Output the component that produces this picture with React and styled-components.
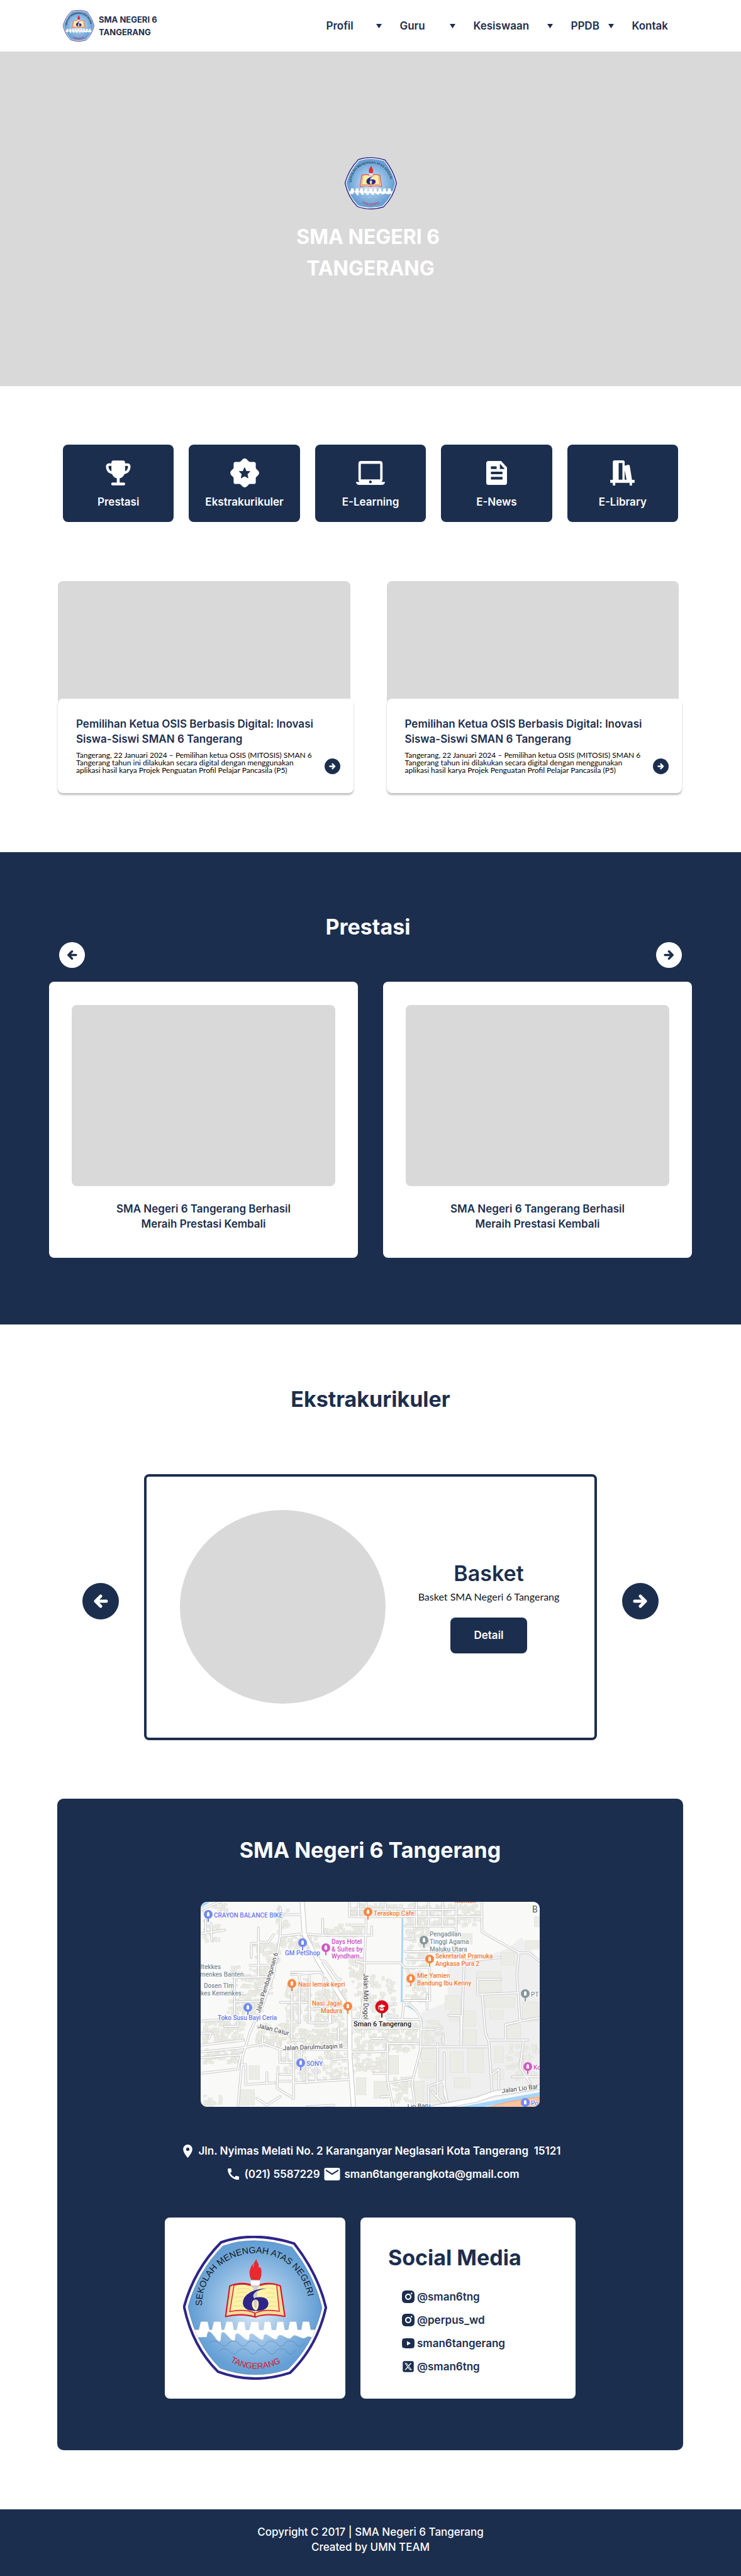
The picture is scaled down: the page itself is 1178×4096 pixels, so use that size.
import React from 'react';
import styled, { createGlobalStyle } from 'styled-components';
import { MdLocationOn, MdCall, MdEmail } from 'react-icons/md';
import { RiInstagramFill, RiYoutubeFill } from 'react-icons/ri';
import { FaSquareXTwitter } from 'react-icons/fa6';

const navy = '#1c2e4e';
const grey = '#d9d9d9';
const display = '"Inter", "Open Sans", sans-serif';
const body = '"Lato", "Open Sans", sans-serif';

const GlobalStyle = createGlobalStyle`
  *, *::before, *::after { box-sizing: border-box; }
  body { margin: 0; background: #fff; color: ${navy}; font-family: ${display}; }
  h1, h2, h3, p, ul { margin: 0; padding: 0; }
  ul { list-style: none; }
  a { color: inherit; text-decoration: none; }
  button { font: inherit; color: inherit; border: 0; padding: 0; background: none; cursor: pointer; }
  svg { display: block; flex: none; }
`;

/* ---------- header ---------- */

const Header = styled.header`
  display: flex;
  align-items: center;
  justify-content: space-between;
  min-height: 82px;
  padding: 0 116px 0 100px;
`;

const Brand = styled.a`
  display: flex;
  align-items: center;
  gap: 7px;
  font-size: 13px;
  line-height: 20px;
  font-weight: 700;
`;

const Nav = styled.nav`
  display: flex;
  align-items: center;
  gap: 28px;
  font-size: 17px;
  line-height: 24px;
  font-weight: 600;
`;

const NavMenu = styled.button`
  display: flex;
  align-items: center;
  justify-content: space-between;
  min-width: ${(p) => p.$width}px;
`;

/* ---------- hero ---------- */

const Hero = styled.section`
  display: flex;
  flex-direction: column;
  align-items: center;
  gap: 19px;
  min-height: 532px;
  padding-top: 168px;
  background: ${grey};
`;

const HeroTitle = styled.h1`
  color: #fff;
  font-size: 32px;
  line-height: 50px;
  font-weight: 700;
  text-align: center;
`;

/* ---------- shortcuts ---------- */

const Shortcuts = styled.nav`
  display: grid;
  grid-template-columns: repeat(5, 1fr);
  gap: 24px;
  padding: 93px 100px 0;
`;

const Shortcut = styled.a`
  display: flex;
  flex-direction: column;
  align-items: center;
  gap: 10px;
  padding: 21px 0 20px;
  border-radius: 8px;
  background: ${navy};
  color: #fff;
  font-size: 17px;
  line-height: 24px;
  font-weight: 600;
`;

const ShortcutIcon = styled.span`
  display: flex;
  align-items: center;
  height: 48px;
`;

/* ---------- news ---------- */

const NewsGrid = styled.section`
  display: grid;
  grid-template-columns: 1fr 1fr;
  gap: 53px;
  padding: 94px 94px 0 92px;
`;

const NewsPhoto = styled.div`
  height: 195px;
  margin-right: 5px;
  border-radius: 8px 8px 0 0;
  background: ${grey};
`;

const NewsBody = styled.div`
  display: flex;
  align-items: flex-end;
  gap: 14px;
  margin-top: -8px;
  padding: 28px 21px 30px 29px;
  border-radius: 8px;
  background: #fff;
  box-shadow: 0 3px 3px rgba(0, 0, 0, 0.25);
`;

const NewsText = styled.div`
  flex: 1;
`;

const CardTitle = styled.h3`
  font-size: 17px;
  line-height: 24px;
  font-weight: 600;
`;

const NewsSummary = styled.p`
  margin-top: 8px;
  color: #000;
  font: 400 12px/12px ${body};
`;

const RoundButton = styled.button`
  display: flex;
  flex: none;
  align-items: center;
  justify-content: center;
  width: ${(p) => p.$size}px;
  height: ${(p) => p.$size}px;
  border-radius: 50%;
  background: ${(p) => (p.$light ? '#fff' : navy)};
  color: ${(p) => (p.$light ? navy : '#fff')};
`;

/* ---------- achievements ---------- */

const Achievements = styled.section`
  margin-top: 94px;
  padding: 99px 78px 106px;
  background: ${navy};
`;

const SectionTitle = styled.h2`
  color: ${(p) => (p.$light ? '#fff' : navy)};
  font-size: 34px;
  line-height: 40px;
  font-weight: 700;
  text-align: center;
`;

const PagerRow = styled.div`
  display: flex;
  justify-content: space-between;
  padding: 4px 16px 22px;
`;

const AchievementGrid = styled.div`
  display: grid;
  grid-template-columns: 1fr 1fr;
  gap: 40px;
`;

const AchievementCard = styled.article`
  display: flex;
  flex-direction: column;
  align-items: center;
  gap: 24px;
  padding: 37px 36px 42px;
  border-radius: 8px;
  background: #fff;
  text-align: center;
`;

const AchievementPhoto = styled.div`
  width: 100%;
  height: 288px;
  border-radius: 8px;
  background: ${grey};
`;

const AchievementTitle = styled(CardTitle)`
  max-width: 300px;
`;

/* ---------- extracurricular ---------- */

const Clubs = styled.section`
  padding: 99px 131px 0;
`;

const ClubRow = styled.div`
  display: flex;
  align-items: center;
  gap: 40px;
  margin-top: 99px;
`;

const ClubArrow = styled(RoundButton)`
  margin-bottom: 20px;
`;

const ClubCard = styled.article`
  display: flex;
  align-items: center;
  flex: 1;
  padding: 53px 4px 54px 53px;
  border: 4px solid ${navy};
  border-radius: 8px;
`;

const ClubPhoto = styled.div`
  width: 327px;
  height: 308px;
  border-radius: 50%;
  background: ${grey};
`;

const ClubInfo = styled.div`
  display: flex;
  flex: 1;
  flex-direction: column;
  align-items: center;
`;

const ClubName = styled.h3`
  font-size: 34px;
  line-height: 40px;
  font-weight: 600;
`;

const ClubText = styled.p`
  margin-top: 5px;
  color: #0d1626;
  font: 400 16px/24px ${body};
`;

const DetailButton = styled.button`
  margin-top: 21px;
  padding: 16px 37px;
  border-radius: 8px;
  background: ${navy};
  color: #fff;
  font-size: 17px;
  line-height: 25px;
  font-weight: 600;
`;

/* ---------- contact ---------- */

const Contact = styled.section`
  display: flex;
  flex-direction: column;
  align-items: center;
  margin: 93px 92px 0 91px;
  padding: 62px 24px 82px;
  border-radius: 10px;
  background: ${navy};
  color: #fff;
`;

const MapFrame = styled.div`
  width: 100%;
  max-width: 539px;
  margin: 62px 0 58px;
  overflow: hidden;
  border-radius: 10px;
`;

const Address = styled.address`
  display: flex;
  flex-direction: column;
  align-items: center;
  gap: 13px;
  font-size: 17px;
  line-height: 24px;
  font-weight: 600;
  font-style: normal;
`;

const ContactLine = styled.div`
  display: flex;
  gap: 4px;
  padding-left: ${(p) => p.$indent || 0}px;
`;

const ContactItem = styled.a`
  display: flex;
  align-items: center;
  gap: 5px;
  height: 24px;
  white-space: pre;
`;

const ContactCards = styled.div`
  display: flex;
  gap: 24px;
  margin-top: 57px;
`;

const WhiteCard = styled.div`
  width: ${(p) => p.$width}px;
  padding: ${(p) => p.$pad};
  border-radius: 8px;
  background: #fff;
  color: ${navy};
`;

const SocialTitle = styled.h3`
  font-size: 34px;
  line-height: 40px;
  font-weight: 700;
`;

const SocialList = styled.ul`
  display: flex;
  flex-direction: column;
  gap: 13px;
  margin-top: 30px;
  padding-left: 20px;
`;

const SocialLink = styled.a`
  display: flex;
  align-items: center;
  gap: 2px;
  font-size: 17px;
  line-height: 24px;
  font-weight: 600;
`;

const SocialIcon = styled.span`
  display: flex;
  justify-content: center;
  width: 24px;
`;

const Footer = styled.footer`
  margin-top: 94px;
  padding: 24px 24px 34px;
  background: ${navy};
  color: #fff;
  font-size: 17px;
  line-height: 24px;
  font-weight: 500;
  text-align: center;
`;

/* ---------- drawings ---------- */

const emblemOutline =
  'M268 85Q460 16 700 92Q840 270 887 470Q835 700 675 855Q460 926 250 848Q100 700 50 465Q110 245 268 85Z';

function Emblem({ size, id }) {
  const wave = (x, y, n) => {
    let d = `M${x} ${y}`;
    for (let i = 0; i < n; i += 1) d += 'c28-22 50-8 62 6s34 26 50-6';
    return d;
  };
  return (
    <svg width={size} height={size} viewBox="44 46 850 850" role="img" aria-label="Logo SMA Negeri 6 Tangerang">
      <defs>
        <radialGradient id={`${id}-sky`} gradientUnits="userSpaceOnUse" cx="470" cy="470" r="400">
          <stop offset="0" stopColor="#e4f0fb" />
          <stop offset="0.45" stopColor="#a5c9ea" />
          <stop offset="1" stopColor="#649fd5" />
        </radialGradient>
        <path id={`${id}-top`} d="M156 460V450A314 302 0 0 1 784 450V480" />
        <path id={`${id}-bottom`} d="M322 788Q480 880 650 780" />
      </defs>
      <path d={emblemOutline} fill="#fff" stroke="#2e2588" strokeWidth="15" strokeLinejoin="round" />
      <path
        d={emblemOutline}
        transform="translate(469 470) scale(.945) translate(-469 -470)"
        fill={`url(#${id}-sky)`}
        stroke="#4a6c92"
        strokeWidth="2"
      />
      <path
        d="M110 601H137L149 553H189L200 601H214L226 553H266L272 601H286L300 553H336L344 601H360L370 553H408L414 601H434L446 553H490L494 601H518L524 553H560L568 601H592L600 553H636L644 601H664L674 553H712L720 601H742L750 553H788L797 601H825L806 648q-22-14-36-2t-44-4-40 2-44-2-40 4-44-4-38 4-42-4-42 2-42-2-42 4-42-6-42 4-40-4-44 4L132 645Z"
        fill="#fff"
        stroke="#b9bcc4"
        strokeWidth="2"
      />
      <g fill="none" stroke="#5d83b5" strokeWidth="3">
        <path d={wave(200, 678, 5)} />
        <path d={wave(258, 724, 4)} />
      </g>
      <path d="M320 342Q400 312 470 345Q545 312 618 342L645 522Q540 500 470 526Q390 500 295 523Z" fill="#f3dc9a" stroke="#d8192a" strokeWidth="8" strokeLinejoin="round" />
      <path d="M345 338Q410 322 470 350Q535 322 596 336L612 492Q530 476 470 502Q400 474 320 494Z" fill="#fdf3a9" stroke="#d8192a" strokeWidth="5" />
      <g fill="none" stroke="#dcbf6c" strokeWidth="2">
        <path d="M360 362q50-14 90 6M356 386q40-10 60-4M352 410q30-8 50-4M346 436q30-8 48-4M340 462q40-8 66 4" />
        <path d="M500 362q50-16 84 0M530 386q30-8 58 0M540 410q30-4 50 0M552 436q20-4 44 2M540 464q30-6 60 0" />
      </g>
      <path d="M441 310h58l-4 30h-50z" fill="#fff" stroke="#c2c2c6" strokeWidth="2" />
      <path d="M443 340h54l-14 20-4 100q-8 28-16 0l-4-100z" fill="#cfcdd0" />
      <path d="M446 306Q428 268 442 238Q446 222 458 210L456 238Q464 222 462 206Q468 200 476 184Q482 204 490 214L490 234Q502 226 506 250Q510 282 496 308Z" fill="#e62a2e" />
      <path
        d="M536 358Q460 358 420 394Q388 424 400 460Q416 492 474 490Q546 490 548 444Q546 410 502 408Q470 408 464 416Q448 394 478 374Q504 362 536 358ZM472 422Q492 424 490 452Q488 484 472 486Q452 480 450 448Q452 424 472 422Z"
        fill="#2e2588"
        fillRule="evenodd"
      />
      <path d="M466 500q6 16 0 26" stroke="#d8192a" strokeWidth="8" fill="none" />
      <text fontFamily='"Liberation Sans", Arial, sans-serif' fontSize="53" fill="#16181c">
        <textPath href={`#${id}-top`}>SEKOLAH MENENGAH ATAS NEGERI</textPath>
      </text>
      <text fontFamily='"Liberation Sans", Arial, sans-serif' fontSize="50" fill="#d8192a">
        <textPath href={`#${id}-bottom`}>TANGERANG</textPath>
      </text>
    </svg>
  );
}

const Caret = () => (
  <svg width="9" height="7" viewBox="0 0 9 7" aria-hidden="true">
    <path d="M0 0h9L4.500 7z" fill="currentColor" />
  </svg>
);

const Arrow = ({ size, left }) => (
  <svg width={size} height={size} viewBox="0 0 24 24" aria-hidden="true">
    <path
      d={left ? 'M21 12H4M12 4L4 12l8 8' : 'M3 12h17M12 4l8 8-8 8'}
      fill="none"
      stroke="currentColor"
      strokeWidth="5"
      strokeLinecap="round"
      strokeLinejoin="round"
    />
  </svg>
);

const TrophyIcon = () => (
  <svg width="40" height="40" viewBox="75 44 147 149" aria-hidden="true">
    <path d="M121 45h55q13 0 13 13v48q-2 34-28 43h-25q-26-9-28-43V58q0-13 13-13z" fill="#fff" />
    <path d="M110 69H95q-12 0-12 14q2 32 36 36M187 69h15q12 0 12 14q-2 32-36 36" fill="none" stroke="#fff" strokeWidth="15" />
    <path d="M140 145h17v34h-17z" fill="#fff" />
    <rect x="107" y="175" width="82" height="17" rx="7" fill="#fff" />
  </svg>
);

const BadgeIcon = () => (
  <svg width="46" height="46" viewBox="798 33 171 171" aria-hidden="true">
    <rect x="818" y="53" width="131" height="131" rx="12" fill="#fff" />
    <rect x="818" y="53" width="131" height="131" rx="18" fill="#fff" transform="rotate(45 883.5 118.500)" />
    <path
      d="M883 88l9 20 22 2-16 15 5 22-20-11-20 11 5-22-16-15 22-2z"
      fill={navy}
      stroke={navy}
      strokeWidth="4"
      strokeLinejoin="round"
    />
  </svg>
);

const LaptopIcon = () => (
  <svg width="46" height="38" viewBox="71 45 169 139" aria-hidden="true">
    <path
      d="M101 45h109q16 0 16 16v92q0 10-8 14h22q-1 17-17 17H88q-16 0-17-17h22q-8-4-8-14V61q0-16 16-16zM99 61v91h113V61zM155 159a8 8 0 1 0 .1 0z"
      fill="#fff"
      fillRule="evenodd"
    />
  </svg>
);

const NewsIcon = () => (
  <svg width="33" height="38" viewBox="737 45 120 138" aria-hidden="true">
    <path
      d="M750 45h73l34 37v88q0 13-13 13h-94q-13 0-13-13V58q0-13 13-13zM816 60v31h28zM764 76v15h33V76zM764 107v14h67v-14zM764 137v15h67v-15z"
      fill="#fff"
      fillRule="evenodd"
    />
  </svg>
);

const LibraryIcon = () => (
  <svg width="39" height="40" viewBox="1365 45 142 147" aria-hidden="true">
    <path d="M1390 45h49q10 0 10 10v21l21-5q8-1 9 7l13 81h15v17h-15v16h-14v-16h-84v16h-14v-16h-15v-17h15V55q0-10 10-10zM1414 61v97h22V61zM1449 103v55h11z" fill="#fff" fillRule="evenodd" />
  </svg>
);

/* ---------- map ---------- */

const SX = 0.3546;
const SY = 0.2726;
const mx = (x) => Math.round((x - 23) * SX);
const my = (y) => Math.round((y - 54) * SY);

const blocks = [
  [30, 60, 150, 120, 14], [30, 160, 110, 290, 20], [250, 290, 380, 420, 50], [150, 420, 350, 620, 110],
  [360, 70, 420, 250, 24], [380, 240, 560, 330, 50], [560, 180, 750, 260, 40], [690, 60, 930, 140, 60],
  [680, 360, 760, 500, 44], [700, 470, 900, 740, 80], [940, 60, 1280, 200, 130], [940, 200, 1050, 640, 120],
  [140, 620, 300, 720, 50], [400, 500, 520, 760, 70], [520, 560, 680, 790, 110], [270, 760, 460, 900, 90],
  [30, 740, 220, 880, 90], [460, 790, 690, 900, 120], [700, 740, 1000, 930, 160], [380, 920, 680, 1110, 110],
  [30, 910, 210, 1000, 60], [700, 930, 860, 1060, 50], [880, 1060, 990, 1230, 40], [1020, 740, 1110, 890, 34],
  [1390, 880, 1543, 1100, 60], [30, 1180, 120, 1250, 14],
];

const warehouses = [
  [1120, 600, 68, 80], [1140, 690, 50, 60], [1195, 690, 60, 90], [1200, 800, 60, 84], [1190, 240, 50, 60],
  [1370, 350, 60, 74], [1260, 460, 110, 120], [1300, 610, 130, 60], [1390, 770, 68, 90], [1465, 640, 70, 110],
  [1320, 690, 60, 50], [1010, 910, 60, 66], [1000, 990, 72, 90], [1140, 930, 60, 120], [1220, 910, 70, 140],
  [1050, 1130, 64, 90], [1160, 1080, 70, 60], [860, 950, 50, 110], [800, 1100, 60, 100], [240, 1010, 46, 80],
  [200, 1150, 64, 90], [1480, 280, 60, 50], [1520, 140, 22, 60], [1340, 900, 40, 90], [1320, 1030, 60, 60],
  [980, 1100, 44, 120], [720, 1080, 44, 100],
];

function makeHouses() {
  let seed = 7;
  const next = () => {
    seed = (seed * 16807) % 2147483647;
    return seed / 2147483647;
  };
  return blocks.flatMap(([x0, y0, x1, y1, n]) =>
    Array.from({ length: n }, () => [
      x0 + next() * (x1 - x0 - 12),
      y0 + next() * (y1 - y0 - 14),
      8 + next() * 12,
      10 + next() * 14,
    ]),
  );
}

const houses = makeHouses();

const streets = [
  'M23 100L110 54M23 240L130 218M45 160V240M70 180L72 280M380 90V250L350 480L300 660L245 810L210 960L190 1250',
  'M400 130L480 128M380 255L480 240L560 248H790V200M570 155V248M765 54V180L757 410V560L740 740',
  'M690 54V140H1280M690 96H930M730 54V140M850 54V96M695 190H765M1045 54V200M990 54V200M1168 54V240M1108 54V200M940 98H1160M940 195H1168M1284 54V230L1450 352H1495L1543 400',
  'M1450 352L1440 480L1455 750L1543 730M1390 770L1455 752M1390 770V860M940 345H1180Q1205 350 1205 400L1190 890M1205 400L1365 380M940 436H1050V630H935M940 270H975V240M945 390H1050M1265 505H1370M1265 505V595L1440 585M1285 595L1300 820L1315 870L1330 1170M1315 860H1490',
  'M282 205V290H325L350 245M250 300V380M250 295H282V500M245 425H340M175 495L350 490M175 500V740M175 635H300M130 780H190V740M23 750L140 740',
  'M757 410H920L935 436M720 400L757 412M540 400H580L640 510L650 505M430 480L560 465L580 490M430 465H560M465 480V760M432 540V850M510 480V760H605V700M515 680L690 670M575 500V590M600 640V760M380 640H500M280 560L340 555',
  'M935 640L925 740M930 655H960Q1008 700 1012 760L1008 920L970 1110L985 1250M860 740H1010M855 720H905M770 650H885M690 740H740L760 780M700 790H1005M1010 798H1070M1040 600L1038 680M1135 715L1190 720',
  'M23 890L215 860M215 905L310 882L378 915H690M300 840V882M23 930L215 905M23 965L210 945M23 1055L190 1030L205 940M205 1005H225V1120L355 1110M320 1050V1112M378 920V990H440V1110M370 1020L365 1140L400 1170L440 1200V1110L690 1090M380 1060H440M375 1100H440M410 920V990M440 920V1000M475 920V990M500 1000V1110M540 990V1100',
  'M610 975L690 965M700 930H780L860 925M860 870V1090L885 1250M800 1055H855M865 1110L970 1090M1008 900H1310M1085 880V1200M1045 1240V1130L1110 1100L1125 1190M1115 935V1170L1135 1240M1110 830V880M1190 720V890M1420 1075H1543M1470 860L1455 1020L1500 1110M1330 1060L1360 1030V1170M1060 1160L1120 1240',
  'M430 860H490M640 790V860M790 850H850M865 880H1000M275 1200L320 1240L380 1190M500 1250L620 1240M830 1190H870M23 820H70L60 850',
];

const avenues = ['M478 54L488 245L560 420L690 690L692 960L708 1250'];

const pins = [
  ['#7189f0', 57, 128], ['#7189f0', 481, 292], ['#cd5cc5', 584, 321], ['#fb8540', 773, 114], ['#86969b', 1024, 278],
  ['#fb8540', 1049, 387], ['#fb8540', 966, 500], ['#fb8540', 433, 530], ['#fb8540', 682, 662], ['#7189f0', 234, 671],
  ['#7189f0', 470, 992], ['#86969b', 1478, 590], ['#cd5cc5', 1489, 1016], ['#7189f0', 1478, 1224],
];

const places = [
  ['#5f78ee', 83, 147, 'CRAYON BALANCE BIKE'], ['#5f78ee', 402, 366, 'GM PetShop'],
  ['#cb4fc3', 610, 299, 'Days Hotel'], ['#cb4fc3', 610, 342, '& Suites by'], ['#cb4fc3', 610, 385, 'Wyndham…'],
  ['#f2762f', 799, 133, 'Teraskop Càfe'], ['#f2762f', 1162, 60, 'Montok'],
  ['#7c8f96', 1050, 256, 'Pengadilan'], ['#7c8f96', 1050, 299, 'Tinggi Agama'], ['#7c8f96', 1050, 342, 'Maluku Utara'],
  ['#f2762f', 1075, 385, 'Sekretariat Pramuka'], ['#f2762f', 1075, 428, 'Angkasa Pura 2'],
  ['#f2762f', 992, 499, 'Mie Yamien'], ['#f2762f', 992, 542, 'Bandung Ibu Kenny'],
  ['#7c8f96', 23, 447, 'ltekkes'], ['#7c8f96', 21, 490, 'menkes Banten'], ['#7c8f96', 36, 556, 'Dosen Tlm'],
  ['#7c8f96', 23, 599, 'kes Kemenkes…'], ['#f2762f', 459, 549, 'Nasi lemak kepri'],
  ['#f2762f', 522, 661, 'Nasi Jagal'], ['#f2762f', 562, 704, 'Madura'], ['#5f78ee', 98, 744, 'Toko Susu Bayi Ceria'],
  ['#5f78ee', 496, 1011, 'SONY'], ['#7c8f96', 1504, 608, 'PT'], ['#cb4fc3', 1514, 1035, 'Ko'], ['#5f78ee', 1504, 1242, 'Po'],
];

const streetNames = [
  [288, 702, -73, 'Jalan Pembangunan 6'], [752, 472, 90, 'Jalan Mdr Dogol'], [277, 786, 14, 'Jalan Catur'],
  [393, 918, -2, 'Jalan Darulmutaqin II'], [1373, 1170, -7, 'Jalan Lio Bar'], [952, 1262, -3, 'Lio Baru'],
];

const SchoolMap = () => (
  <svg width="100%" viewBox="0 0 539 326" role="img" aria-label="Peta lokasi Sman 6 Tangerang">
    <rect width="539" height="326" fill="#f9f9f8" />
    <g transform={`scale(${SX} ${SY}) translate(-23 -54)`}>
      <path d="M1012 700L1130 640V430L1400 330L1460 260L1543 400V1150L1130 1250H1000L1012 900Z" fill="#efeff0" />
      <g fill="#ecece7" stroke="#dfdfd6" strokeWidth="2">
        {houses.map(([x, y, w, h], i) => (
          <rect key={i} x={x} y={y} width={w} height={h} />
        ))}
        {warehouses.map(([x, y, w, h], i) => (
          <rect key={i} x={x} y={y} width={w} height={h} />
        ))}
      </g>
      <g fill="none" stroke="#a6d5fb">
        <path d="M928 150L924 640M930 650Q1012 690 1014 760" strokeWidth="8" />
        <path d="M1012 800L1008 930L970 1110L985 1250" strokeWidth="6" />
        <path d="M23 80L60 54" strokeWidth="12" />
      </g>
      <g fill="none" strokeLinejoin="round" strokeLinecap="round">
        {streets.map((d) => (
          <path key={d} d={d} stroke="#c9c9cb" strokeWidth="4" vectorEffect="non-scaling-stroke" />
        ))}
        {avenues.map((d) => (
          <path key={d} d={d} stroke="#c4c4c6" strokeWidth="8" vectorEffect="non-scaling-stroke" />
        ))}
        {streets.map((d) => (
          <path key={d} d={d} stroke="#fff" strokeWidth="2" vectorEffect="non-scaling-stroke" />
        ))}
        {avenues.map((d) => (
          <path key={d} d={d} stroke="#fff" strokeWidth="6" vectorEffect="non-scaling-stroke" />
        ))}
        <path d="M1060 1258L1260 1208L1340 1172L1560 1130" stroke="#c4c4c6" strokeWidth="9" vectorEffect="non-scaling-stroke" />
        <path d="M1060 1258L1260 1208L1340 1172L1560 1130" stroke="#fff" strokeWidth="7" vectorEffect="non-scaling-stroke" />
      </g>
      <path d="M1180 1251L1543 1165V1188L1290 1251Z" fill="#a6d5fb" />
      <path d="M1310 1251Q1440 1205 1543 1192V1251Z" fill="#fbc19c" stroke="#f5a172" strokeWidth="3" />
    </g>
    <g fontFamily="Roboto, sans-serif" fontSize="10" stroke="#fff" strokeWidth="2" paintOrder="stroke" strokeLinejoin="round">
      {streetNames.map(([x, y, angle, name]) => (
        <text key={name} fill="#3c3d40" transform={`translate(${mx(x)} ${my(y)}) rotate(${angle})`}>
          {name}
        </text>
      ))}
      <g fontWeight="500">
        {places.map(([color, x, y, name]) => (
          <text key={name} x={mx(x)} y={my(y)} fill={color}>
            {name}
          </text>
        ))}
        <text x={mx(1510)} y={my(116)} fontSize="14" fontWeight="400" fill="#55575b">B</text>
        <text x={mx(708)} y={my(780)} fontSize="11" fill="#111">Sman 6 Tangerang</text>
      </g>
    </g>
    {pins.map(([color, x, y]) => (
      <g key={`${x}-${y}`} transform={`translate(${mx(x)} ${my(y)})`}>
        <path d="M0 5v7" stroke={color} strokeWidth="2" />
        <circle r="7" fill={color} />
        <path d="M-2-2q2-4 4 0v5h-4z" fill="#fff" />
      </g>
    ))}
    <g transform={`translate(${mx(835)} ${my(668)})`}>
      <path d="M0 8v9" stroke="#8e0a16" strokeWidth="2" />
      <circle r="10" fill="#e10617" stroke="#a80a18" strokeWidth="1" />
      <path d="M-6-1l6-3 6 3-6 3zM-3 2q3 2 6 0v3q-3 2-6 0z" fill="#fff" />
      <path d="M-5-1v5" stroke="#fff" />
    </g>
  </svg>
);

/* ---------- content ---------- */

const menus = [
  { label: 'Profil', width: 89 },
  { label: 'Guru', width: 89 },
  { label: 'Kesiswaan', width: 127 },
  { label: 'PPDB', width: 69 },
];

const shortcuts = [
  ['Prestasi', TrophyIcon],
  ['Ekstrakurikuler', BadgeIcon],
  ['E-Learning', LaptopIcon],
  ['E-News', NewsIcon],
  ['E-Library', LibraryIcon],
];

const news = {
  title: 'Pemilihan Ketua OSIS Berbasis Digital: Inovasi Siswa-Siswi SMAN 6 Tangerang',
  summary:
    'Tangerang, 22 Januari 2024 – Pemilihan ketua OSIS (MITOSIS) SMAN 6 Tangerang tahun ini dilakukan secara digital dengan menggunakan aplikasi hasil karya Projek Penguatan Profil Pelajar Pancasila (P5)',
};

const socials = [
  ['@sman6tng', <RiInstagramFill size={24} />],
  ['@perpus_wd', <RiInstagramFill size={24} />],
  ['sman6tangerang', <RiYoutubeFill size={24} />],
  ['@sman6tng', <FaSquareXTwitter size={20} />],
];

export default function App() {
  return (
    <>
      <GlobalStyle />
      <Header>
        <Brand href="#">
          <Emblem size={50} id="brand" />
          <span>
            SMA NEGERI 6<br />TANGERANG
          </span>
        </Brand>
        <Nav aria-label="Menu utama">
          {menus.map((m) => (
            <NavMenu key={m.label} type="button" aria-haspopup="true" $width={m.width}>
              {m.label}
              <Caret />
            </NavMenu>
          ))}
          <a href="#kontak">Kontak</a>
        </Nav>
      </Header>

      <main>
        <Hero>
          <Emblem size={83} id="hero" />
          <HeroTitle>
            SMA NEGERI 6&nbsp;<br />TANGERANG
          </HeroTitle>
        </Hero>

        <Shortcuts aria-label="Pintasan">
          {shortcuts.map(([label, Icon]) => (
            <Shortcut key={label} href="#">
              <ShortcutIcon><Icon /></ShortcutIcon>
              {label}
            </Shortcut>
          ))}
        </Shortcuts>

        <NewsGrid>
          {[1, 2].map((n) => (
            <article key={n}>
              <NewsPhoto />
              <NewsBody>
                <NewsText>
                  <CardTitle>{news.title}</CardTitle>
                  <NewsSummary>{news.summary}</NewsSummary>
                </NewsText>
                <RoundButton type="button" $size={25} aria-label="Baca selengkapnya"><Arrow size={11} /></RoundButton>
              </NewsBody>
            </article>
          ))}
        </NewsGrid>

        <Achievements>
          <SectionTitle $light>Prestasi&nbsp;</SectionTitle>
          <PagerRow>
            <RoundButton type="button" $light $size={41} aria-label="Sebelumnya"><Arrow size={17} left /></RoundButton>
            <RoundButton type="button" $light $size={41} aria-label="Berikutnya"><Arrow size={17} /></RoundButton>
          </PagerRow>
          <AchievementGrid>
            {[1, 2].map((n) => (
              <AchievementCard key={n}>
                <AchievementPhoto />
                <AchievementTitle>SMA Negeri 6 Tangerang Berhasil Meraih Prestasi Kembali</AchievementTitle>
              </AchievementCard>
            ))}
          </AchievementGrid>
        </Achievements>

        <Clubs>
          <SectionTitle>Ekstrakurikuler</SectionTitle>
          <ClubRow>
            <ClubArrow type="button" $size={58} aria-label="Ekstrakurikuler sebelumnya"><Arrow size={24} left /></ClubArrow>
            <ClubCard>
              <ClubPhoto />
              <ClubInfo>
                <ClubName>Basket</ClubName>
                <ClubText>Basket SMA Negeri 6 Tangerang</ClubText>
                <DetailButton type="button">Detail</DetailButton>
              </ClubInfo>
            </ClubCard>
            <ClubArrow type="button" $size={58} aria-label="Ekstrakurikuler berikutnya"><Arrow size={24} /></ClubArrow>
          </ClubRow>
        </Clubs>

        <Contact id="kontak">
          <SectionTitle $light>SMA Negeri 6 Tangerang</SectionTitle>
          <MapFrame><SchoolMap /></MapFrame>
          <Address>
            <ContactLine>
              <ContactItem as="span">
                <MdLocationOn size={25} />
                {'Jln. Nyimas Melati No. 2 Karanganyar Neglasari Kota Tangerang  15121'}
              </ContactItem>
            </ContactLine>
            <ContactLine $indent={8}>
              <ContactItem href="tel:0215587229"><MdCall size={24} />(021) 5587229</ContactItem>
              <ContactItem href="mailto:sman6tangerangkota@gmail.com">
                <MdEmail size={30} />sman6tangerangkota@gmail.com
              </ContactItem>
            </ContactLine>
          </Address>
          <ContactCards>
            <WhiteCard $width={287} $pad="29px">
              <Emblem size={229} id="contact" />
            </WhiteCard>
            <WhiteCard $width={342} $pad="44px 20px 39px 44px">
              <SocialTitle>Social Media</SocialTitle>
              <SocialList>
                {socials.map(([name, icon], i) => (
                  <li key={i}>
                    <SocialLink href="#"><SocialIcon>{icon}</SocialIcon>{name}</SocialLink>
                  </li>
                ))}
              </SocialList>
            </WhiteCard>
          </ContactCards>
        </Contact>
      </main>

      <Footer>
        <p>Copyright C 2017 | SMA Negeri 6 Tangerang</p>
        <p>Created by UMN TEAM</p>
      </Footer>
    </>
  );
}
